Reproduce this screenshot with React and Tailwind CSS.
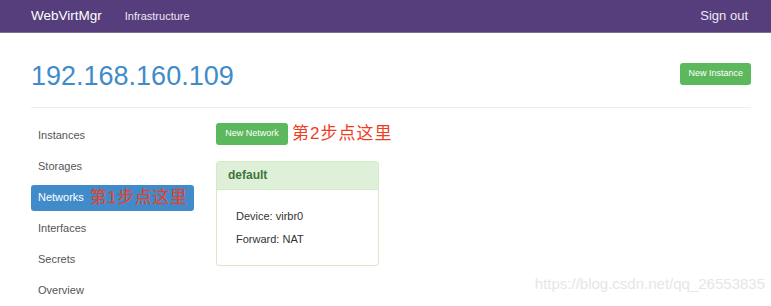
export default function App() {
  const navItems = ['Instances', 'Storages', 'Networks', 'Interfaces', 'Secrets', 'Overview']

  return (
    <div
      className="relative w-[771px] h-[306px] overflow-hidden bg-white"
      style={{ fontFamily: '"Liberation Sans", "Noto Sans CJK SC", sans-serif' }}
    >
      <nav className="h-[33px] bg-[#563d7c] border-b border-[#7f6f97] flex items-center pl-[31px] pr-[23px]">
        <span className="text-[13.5px] text-white">WebVirtMgr</span>
        <span className="ml-[23px] text-[11px] text-[#ece8f2]">Infrastructure</span>
        <span className="ml-auto text-[13px] text-[#ece8f2]">Sign out</span>
      </nav>

      <div className="ml-[31px] w-[720px]">
        <div className="mt-[29px] flex justify-between items-start">
          <h1 className="text-[27px] leading-[1.1] text-[#428bca]">192.168.160.109</h1>
          <button className="mt-[1px] h-[22px] px-[8px] rounded-[3px] bg-[#5cb85c] text-white text-[9px]">
            New Instance
          </button>
        </div>
        <div className="mt-[15px] border-t border-[#eeeeee]" />

        <div className="mt-[15px] flex gap-[22px]">
          <ul className="w-[163px] flex flex-col gap-[5px]">
            {navItems.map((item) => (
              <li
                key={item}
                className={`h-[26px] flex items-center px-[7px] rounded-[3px] text-[11px] whitespace-nowrap ${
                  item === 'Networks' ? 'bg-[#428bca] text-white' : 'text-[#555555]'
                }`}
              >
                {item}
                {item === 'Networks' && (
                  <span className="ml-[6px] text-[17px] leading-none tracking-[0.5px] text-[#f03d1f]">第1步点这里</span>
                )}
              </li>
            ))}
          </ul>

          <div className="flex flex-col">
            <div className="h-[22px] flex items-center whitespace-nowrap">
              <button className="h-[22px] w-[72px] rounded-[3px] bg-[#5cb85c] text-white text-[9px]">
                New Network
              </button>
              <span className="ml-[4px] text-[17px] leading-none tracking-[1px] text-[#f03d1f]">第2步点这里</span>
            </div>

            <div className="mt-[16px] w-[163px] border border-[#d6e9c6] rounded-[3px]">
              <div className="h-[28px] flex items-center px-[11px] bg-[#dff0d8] border-b border-[#d6e9c6] text-[12px] font-bold text-[#3c763d]">
                default
              </div>
              <div className="pl-[19px] pt-[15px] pb-[14px] text-[11px] leading-[23px] text-[#333333]">
                <p>Device: virbr0</p>
                <p>Forward: NAT</p>
              </div>
            </div>
          </div>
        </div>
      </div>

      <div className="absolute right-[6px] bottom-[11px] text-[15px] text-[#e6e6e6]">
        https://blog.csdn.net/qq_26553835
      </div>
    </div>
  )
}
